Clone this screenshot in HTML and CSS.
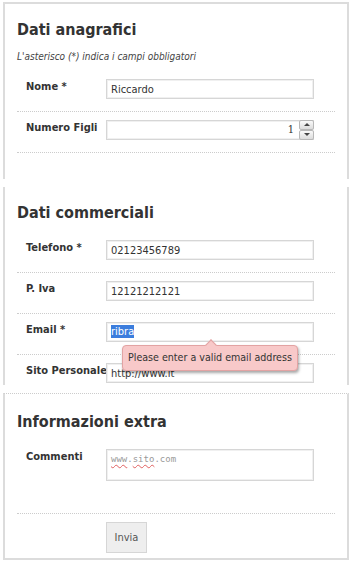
FILE: index.html
```html
<!DOCTYPE html>
<html lang="it">
<head>
  <meta charset="UTF-8">
  <title>Modulo contatto</title>
  <link rel="stylesheet" href="styles.css">
</head>
<body>
<form id="contactForm" class="contact-form">

  <!-- Dati anagrafici -->
  <div class="section first">
    <h2>Dati anagrafici</h2>
    <p class="note">L'asterisco (*) indica i campi obbligatori</p>

    <div class="form-row">
      <label>Nome *</label>
      <input type="text" value="Riccardo">
    </div>

    <div class="form-row">
      <label>Numero Figli</label>
      <div class="number-box">
        <span class="number-value">1</span>
        <span class="spinner">
          <span class="spin up"></span>
          <span class="spin down"></span>
        </span>
      </div>
    </div>
  </div>

  <!-- Dati commerciali -->
  <div class="section">
    <h2>Dati commerciali</h2>

    <div class="form-row">
      <label>Telefono *</label>
      <input type="text" value="02123456789">
    </div>

    <div class="form-row">
      <label>P. Iva</label>
      <input type="text" value="12121212121">
    </div>

    <div class="form-row has-tip">
      <label>Email *</label>
      <div class="fake-input"><span class="selected">ribra</span></div>
      <div class="tooltip">Please enter a valid email address</div>
    </div>

    <div class="form-row last">
      <label>Sito Personale</label>
      <input type="text" value="http://www.it">
    </div>
  </div>

  <!-- Informazioni extra -->
  <div class="section extra">
    <h2>Informazioni extra</h2>

    <div class="form-row tall">
      <label>Commenti</label>
      <div class="fake-textarea"><span class="typo">www</span>.<span class="typo">sito</span>.com</div>
    </div>

    <div class="button-row">
      <button type="submit">Invia</button>
    </div>
  </div>

</form>
</body>
</html>
```

FILE: styles.css
```css
/* impostazioni di base */
body {
  margin: 0;
  padding-top: 2px;
  font-family: "DejaVu Sans Condensed", "DejaVu Sans", sans-serif;
  font-stretch: condensed;
  color: #333;
  background: #fff;
}

.contact-form {
  width: 346px;
  margin-left: 3px;
}

/* ogni sezione ha solo i bordi laterali */
.section {
  border-left: 2px solid #dcdcdc;
  border-right: 2px solid #dcdcdc;
  padding: 0 12px;
  margin-bottom: 8px;
}

.section.first {
  border-top: 2px solid #dcdcdc;
  padding-bottom: 26px;
}

.section.extra {
  border-top: 1px dotted #ccc;
  margin-bottom: 0;
  border-bottom: 2px solid #dcdcdc;
  padding-bottom: 5px;
}

h2 {
  margin: 0;
  padding-top: 16px;
  font-size: 16px;
  line-height: 20px;
  font-weight: bold;
  color: #333;
}

.section.extra h2 {
  padding-top: 18px;
}

.note {
  margin: 11px 0 8px;
  font-size: 10px;
  line-height: 12px;
  font-style: italic;
  color: #444;
}

/* riga etichetta + campo */
.form-row {
  display: grid;
  grid-template-columns: 80px 208px;
  padding: 8px 0 12px 9px;
  border-bottom: 1px dotted #ccc;
  position: relative;
}

.section h2 + .form-row {
  margin-top: 9px;
}

.form-row.last {
  border-bottom: none;
  padding-bottom: 2px;
}

.form-row.tall {
  padding-bottom: 32px;
}

label {
  font-size: 11px;
  font-weight: bold;
  line-height: 14px;
  padding-top: 1px;
  white-space: nowrap;
}

input,
.fake-input,
.number-box,
.fake-textarea {
  box-sizing: border-box;
  width: 208px;
  height: 20px;
  margin: 0;
  padding: 0 4px;
  border: 1px solid #d6d6d6;
  box-shadow: inset 0 0 0 1px #f0f0f0;
  font-family: "DejaVu Sans Condensed", "DejaVu Sans", sans-serif;
  font-stretch: condensed;
  font-size: 11px;
  line-height: 18px;
  color: #333;
  background: #fff;
}

.selected {
  background: #3b7ddd;
  color: #fff;
}

/* campo numerico con frecce */
.number-box {
  display: flex;
  justify-content: flex-end;
  padding-right: 0;
  border-right: none;
}

.number-value {
  padding-right: 5px;
  font-family: "DejaVu Serif", serif;
}

.spinner {
  display: flex;
  flex-direction: column;
  width: 15px;
  margin-top: -1px;
  height: 20px;
}

.spin {
  flex: 1;
  border: 1px solid #b8b8b8;
  border-radius: 2px;
  background: linear-gradient(#fafafa, #dcdcdc);
  position: relative;
}

.spin::after {
  content: "";
  position: absolute;
  left: 4px;
  top: 2px;
  border-left: 3px solid transparent;
  border-right: 3px solid transparent;
}

.spin.up::after {
  border-bottom: 3px solid #444;
}

.spin.down::after {
  border-top: 3px solid #444;
}

.fake-textarea {
  height: 32px;
  font-family: "DejaVu Sans Mono", monospace;
  font-size: 9px;
  line-height: 18px;
  color: #999;
}

.typo {
  text-decoration: underline wavy #e06060;
  text-decoration-thickness: 1px;
  text-underline-offset: 2px;
}

/* fumetto di errore */
.tooltip {
  position: absolute;
  left: 105px;
  top: 31px;
  padding: 0 5px;
  height: 24px;
  line-height: 23px;
  font-size: 10.6px;
  color: #333;
  background: #f8c9c9;
  border: 1px solid #e2a3a3;
  border-radius: 4px;
  box-shadow: 1px 2px 3px rgba(0, 0, 0, 0.35);
  white-space: nowrap;
  z-index: 2;
}

.tooltip::before {
  content: "";
  position: absolute;
  left: 84px;
  top: -5px;
  width: 7px;
  height: 7px;
  background: #f8c9c9;
  border-left: 1px solid #e2a3a3;
  border-top: 1px solid #e2a3a3;
  transform: rotate(45deg);
}

.button-row {
  padding: 8px 0 0 89px;
}

button {
  width: 41px;
  height: 31px;
  padding: 0;
  border: 1px solid #d6d6d6;
  background: #eee;
  font-family: "DejaVu Sans Condensed", "DejaVu Sans", sans-serif;
  font-stretch: condensed;
  font-size: 11px;
  color: #555;
}
```
